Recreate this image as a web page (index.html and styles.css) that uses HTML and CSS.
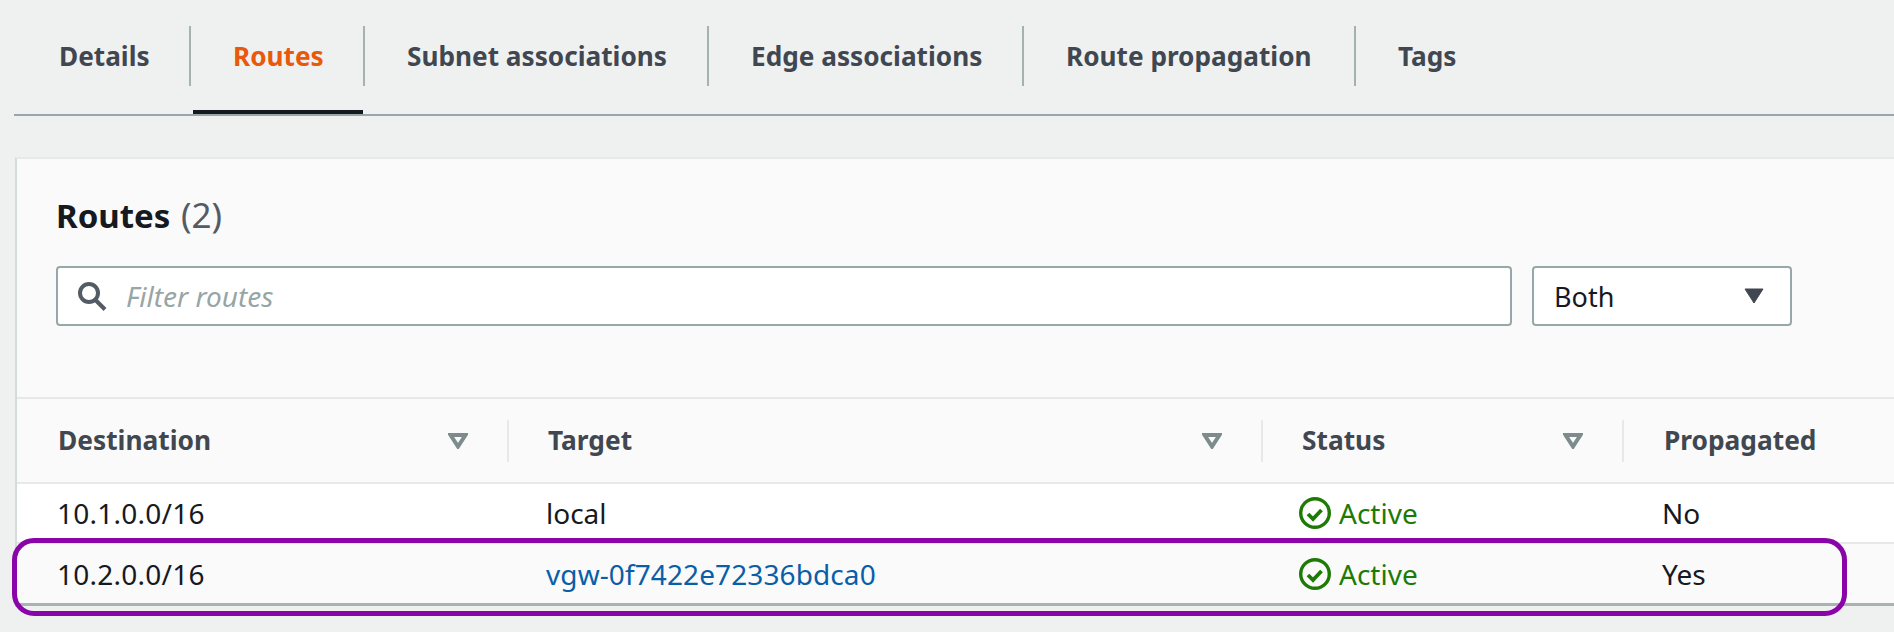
FILE: index.html
```html
<!DOCTYPE html>
<html lang="en">
<head>
    <meta charset="UTF-8">
    <title>Routes</title>
    <link rel="stylesheet" href="styles.css">
</head>
<body>
    <nav class="tabs">
        <a class="tab tab-first">Details</a>
        <a class="tab tab-active">Routes</a>
        <a class="tab">Subnet associations</a>
        <a class="tab">Edge associations</a>
        <a class="tab">Route propagation</a>
        <a class="tab tab-last">Tags</a>
    </nav>

    <main class="panel">
        <div class="panel-head">
            <h2>Routes <span class="count">(2)</span></h2>
            <div class="filters">
                <div class="search">
                    <svg class="search-icon" width="29" height="29" viewBox="0 0 29 29" fill="none" stroke="#545b64" stroke-width="4">
                        <circle cx="11" cy="11" r="9"/>
                        <path d="M17.5 18l9.5 9.5"/>
                    </svg>
                    <span class="placeholder">Filter routes</span>
                </div>
                <div class="select">
                    <span>Both</span>
                    <svg width="20" height="16" viewBox="0 0 20 16"><path d="M1 1h18l-9 14z" fill="#414750" stroke="#414750" stroke-linejoin="round"/></svg>
                </div>
            </div>
        </div>

        <div class="table">
            <div class="row row-head">
                <div class="cell cell-first"><span>Destination</span><svg class="sort" width="20" height="16" viewBox="0 0 20 16"><path d="M2.5 2h15L10 13.5z" fill="none" stroke="#7d8b8c" stroke-width="4"/></svg></div>
                <div class="cell"><span>Target</span><svg class="sort" width="20" height="16" viewBox="0 0 20 16"><path d="M2.5 2h15L10 13.5z" fill="none" stroke="#7d8b8c" stroke-width="4"/></svg></div>
                <div class="cell"><span>Status</span><svg class="sort" width="20" height="16" viewBox="0 0 20 16"><path d="M2.5 2h15L10 13.5z" fill="none" stroke="#7d8b8c" stroke-width="4"/></svg></div>
                <div class="cell cell-last"><span>Propagated</span></div>
            </div>
            <div class="row row-body row-one">
                <div class="cell">10.1.0.0/16</div>
                <div class="cell">local</div>
                <div class="cell status">
                    <svg width="32" height="32" viewBox="0 0 32 32" fill="none" stroke="#1d7a05"><circle cx="16" cy="16" r="14.3" stroke-width="3.4"/><path d="M9 17l5 5 8.5-9" stroke-width="3.8"/></svg>
                    Active
                </div>
                <div class="cell cell-last">No</div>
            </div>
            <div class="row row-body row-two">
                <div class="cell">10.2.0.0/16</div>
                <div class="cell"><a class="link">vgw-0f7422e72336bdca0</a></div>
                <div class="cell status">
                    <svg width="32" height="32" viewBox="0 0 32 32" fill="none" stroke="#1d7a05"><circle cx="16" cy="16" r="14.3" stroke-width="3.4"/><path d="M9 17l5 5 8.5-9" stroke-width="3.8"/></svg>
                    Active
                </div>
                <div class="cell cell-last">Yes</div>
            </div>
            <!-- hand drawn highlight round the second row -->
            <div class="highlight"></div>
        </div>
    </main>
</body>
</html>
```

FILE: styles.css
```css
body {
    margin: 0;
    min-height: 632px;
    background-color: #eff1f1;
    font-family: "Noto Sans", "Open Sans", sans-serif;
    color: #16191f;
}
.tabs {
    display: grid;
    grid-template-columns: 177px 174px 344px 315px 332px 120px;
    margin-left: 14px;
    padding: 26px 0 28px;
    border-bottom: 2px solid #98a8a8;
}
.tab {
    position: relative;
    height: 60px;
    line-height: 60px;
    padding-left: 42px;
    box-sizing: border-box;
    font-size: 26.2px;
    font-weight: 700;
    color: #414750;
    white-space: nowrap;
    border-right: 2px solid #a5b2b2;
}
.tab-first {
    padding-left: 45px;
}
.tab-last {
    border-right: none;
}
.tab-active {
    color: #e8590c;
}
.tab-active::after {
    content: "";
    position: absolute;
    left: 2px;
    right: 0;
    bottom: -28px;
    height: 4px;
    background-color: #16191f;
}
.panel {
    margin: 41px 0 0 15px;
    background-color: #fafafa;
    border-top: 2px solid #e6e9e9;
    border-left: 2px solid #d5dbdb;
}
.panel-head {
    height: 238px;
    padding: 0 102px 0 39px;
    box-sizing: border-box;
}
h2 {
    margin: 0;
    padding-top: 33px;
    height: 74px;
    line-height: 46px;
    font-size: 33px;
    font-weight: 700;
}
.count {
    margin-left: 2px;
    font-size: 35px;
    font-weight: 400;
    color: #545b64;
}
.filters {
    display: flex;
    gap: 20px;
}
.search,
.select {
    display: flex;
    align-items: center;
    height: 60px;
    box-sizing: border-box;
    background-color: #fff;
    border: 2px solid #98a8a8;
    border-radius: 4px;
    font-size: 27px;
}
.search {
    flex: 1;
    padding-left: 20px;
}
.search-icon {
    margin-right: 19px;
}
.placeholder {
    font-size: 28px;
    font-style: italic;
    color: #98a5a5;
}
.select {
    width: 260px;
    padding: 0 26px 0 20px;
    justify-content: space-between;
}
.table {
    position: relative;
    border-top: 2px solid #e6e9e9;
    border-bottom: 3px solid #a9b3b3;
}
.row {
    display: grid;
    grid-template-columns: 490px 754px 361px 1fr;
    height: 60px;
    align-items: center;
    box-sizing: border-box;
    border-bottom: 2px solid #e6e9e9;
}
.row-head {
    height: 85px;
    font-size: 26.3px;
    font-weight: 700;
    color: #414750;
}
.row-head span {
    margin-top: -2px;
}
.row-body {
    font-size: 28px;
}
.row-one {
    background-color: #fff;
}
.row-two {
    height: 59px;
    border-bottom: none;
}
.cell {
    display: flex;
    align-items: center;
    padding-left: 39px;
    box-sizing: border-box;
    white-space: nowrap;
}
.cell-last {
    padding-left: 40px;
}
.row-body .cell:first-child {
    padding-left: 40px;
    letter-spacing: 0.25px;
}
.row-head .cell {
    height: 42px;
    justify-content: space-between;
    padding-right: 40px;
    border-left: 2px solid #e6e9e9;
}
.row-head .cell-first {
    padding-left: 41px;
    border-left: none;
}
.sort {
    margin-right: -1px;
}
.link {
    color: #0a5ea8;
    letter-spacing: 0.1px;
}
.row-body .status {
    gap: 8px;
    padding-left: 38px;
    color: #1d7a05;
}
.highlight {
    position: absolute;
    left: -5px;
    right: 47px;
    bottom: -13px;
    height: 78px;
    box-sizing: border-box;
    border: 5px solid #8a05a8;
    border-radius: 22px;
}
```
